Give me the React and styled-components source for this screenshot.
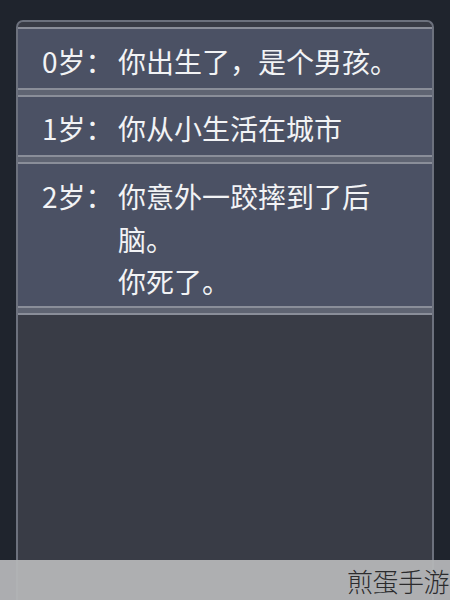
import styled, { createGlobalStyle } from 'styled-components';

const Global = createGlobalStyle`
  html, body {
    margin: 0;
    padding: 0;
    background: #1f242d;
  }
  body {
    font-family: "Noto Sans CJK SC", "Noto Sans", sans-serif;
  }
`;

const Screen = styled.div`
  position: relative;
  width: 450px;
  height: 600px;
  overflow: hidden;
  background: #1f242d;
  padding: 20px 16px 0;
  box-sizing: border-box;
`;

const Panel = styled.div`
  height: 640px;
  border: 2px solid #6c717d;
  border-bottom: none;
  border-radius: 7px 7px 0 0;
  background: #393c46;
  padding-top: 5px;
  box-sizing: border-box;
  display: flex;
  flex-direction: column;
`;

const Divider = styled.div`
  height: 5px;
  border-top: 2px solid #8a8e99;
  border-bottom: 2px solid #8a8e99;
  background: #5f6472;
`;

const TopRule = styled.div`
  height: 2px;
  background: #8a8e99;
`;

const Entry = styled.div`
  display: grid;
  grid-template-columns: 76px 282px;
  padding: ${(p) => p.$pad || '10px 0 10px 24px'};
  background: #4b5164;
  color: #f2f3f5;
  font-size: 28px;
  line-height: ${(p) => p.$lh || '38px'};
`;

const Age = styled.span`
  white-space: nowrap;
`;

const Text = styled.span`
  line-break: strict;
`;

const Watermark = styled.div`
  position: absolute;
  left: 0;
  right: 0;
  bottom: 0;
  height: 40px;
  background: rgba(180, 181, 183, 0.95);
  display: flex;
  justify-content: flex-end;
  align-items: center;
  padding-right: 1px;
  color: #2b2b2d;
  font-size: 26px;
  letter-spacing: -0.5px;
  font-weight: 300;
`;

export default function App() {
  return (
    <>
      <Global />
      <Screen>
        <Panel>
          <TopRule />
          <Entry $pad="13px 0 8px 24px">
            <Age>0岁：</Age>
            <Text>你出生了，是个男孩。</Text>
          </Entry>
          <Divider />
          <Entry $pad="12px 0 8px 24px">
            <Age>1岁：</Age>
            <Text>你从小生活在城市</Text>
          </Entry>
          <Divider />
          <Entry $pad="11px 0 3px 24px" $lh="42.5px">
            <Age>2岁：</Age>
            <Text>
              你意外一跤摔到了后脑。
              <br />
              你死了。
            </Text>
          </Entry>
          <Divider />
        </Panel>
        <Watermark>煎蛋手游</Watermark>
      </Screen>
    </>
  );
}
